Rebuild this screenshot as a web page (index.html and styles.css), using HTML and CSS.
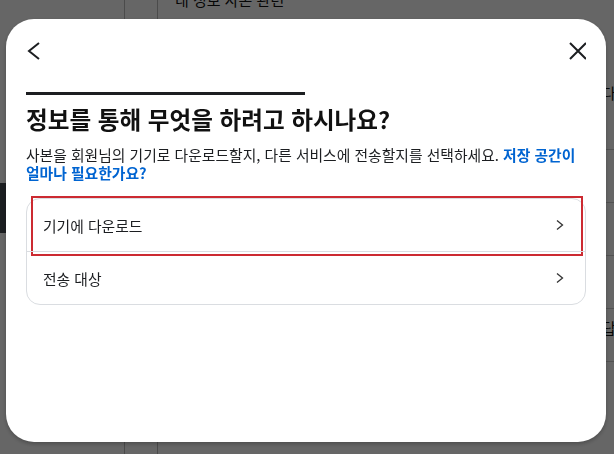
FILE: index.html
```html
<!DOCTYPE html>
<html lang="ko">
<head>
    <meta charset="UTF-8">
    <meta name="viewport" content="width=device-width, initial-scale=1.0">
    <title>정보 다운로드 또는 전송</title>
    <link rel="stylesheet" href="styles.css">
</head>
<body>
    <!-- page behind the dialog -->
    <div class="page">
        <aside class="sidebar">
            <div class="nav-item active"></div>
        </aside>
        <div class="rail"></div>
        <main class="main">
            <div class="main-title">내 정보 사본 관련</div>
            <ul class="rows">
                <li class="row"><span class="row-text first">다운로드</span></li>
                <li class="row"></li>
                <li class="row"></li>
                <li class="row"></li>
                <li class="row"><span class="row-text last">답변</span></li>
            </ul>
        </main>
    </div>

    <div class="overlay">
        <div class="modal" role="dialog">
            <div class="modal-header">
                <button class="icon-btn" aria-label="뒤로">
                    <svg width="24" height="24" viewBox="0 0 24 24"><path d="M13 4 L3 12 L13 20" fill="none" stroke="#1c1e21" stroke-width="2"/></svg>
                </button>
                <button class="icon-btn" aria-label="닫기">
                    <svg width="24" height="24" viewBox="0 0 24 24"><path d="M8 4 L24 20 M24 4 L8 20" fill="none" stroke="#1c1e21" stroke-width="2"/></svg>
                </button>
            </div>

            <div class="modal-body">
                <div class="progress"></div>
                <h1 class="title">정보를 통해 무엇을 하려고 하시나요?</h1>
                <p class="desc">사본을 회원님의 기기로 다운로드할지, 다른 서비스에 전송할지를 선택하세요. <a href="#" class="link">저장 공간이 얼마나 필요한가요?</a></p>

                <div class="options">
                    <a href="#" class="option highlighted">
                        <span>기기에 다운로드</span>
                        <svg width="10" height="12" viewBox="0 0 10 12"><path d="M2 1.5 L7.5 6 L2 10.5" fill="none" stroke="#333" stroke-width="1.3"/></svg>
                    </a>
                    <a href="#" class="option">
                        <span>전송 대상</span>
                        <svg width="10" height="12" viewBox="0 0 10 12"><path d="M2 1.5 L7.5 6 L2 10.5" fill="none" stroke="#333" stroke-width="1.3"/></svg>
                    </a>
                </div>
            </div>
        </div>
    </div>
</body>
</html>
```

FILE: styles.css
```css
body {
    margin: 0;
    font-family: "Noto Sans CJK KR", "Noto Sans", sans-serif;
    color: #1c1e21;
    background: #fff;
    overflow: hidden;
}

/* background page */
.page {
    display: flex;
    height: 100vh;
}

.sidebar {
    flex-shrink: 0;
    width: 125px;
    border-right: 1px solid #bbb;
    padding-top: 183px;
    box-sizing: border-box;
}

.nav-item {
    height: 50px;
}

.nav-item.active {
    background: #454b52;
}

.rail {
    flex-shrink: 0;
    width: 32px;
    border-right: 1px solid #bbb;
}

.main {
    flex: 1;
    min-width: 0;
    padding-left: 17px;
}

.main-title {
    margin-top: -11px;
    font-size: 15px;
    line-height: 22px;
    color: #111;
}

.rows {
    list-style: none;
    margin: 86px 0 0;
    padding: 0;
}

.row {
    height: 52px;
    border-bottom: 1px solid #ccc;
    display: flex;
    align-items: flex-start;
}

.row-text {
    margin-left: 427px;
    font-size: 15px;
    line-height: 20px;
    white-space: nowrap;
    color: #111;
}

.row-text.first {
    margin-top: -14px;
}

.row-text.last {
    margin-top: 9px;
}

/* dialog */
.overlay {
    position: fixed;
    inset: 0;
    background: rgba(0, 0, 0, 0.6);
    display: flex;
    align-items: flex-start;
    padding: 19px 0 0 6px;
}

.modal {
    width: 600px;
    height: 423px;
    background: #fff;
    border-radius: 28px;
    box-shadow: 0 2px 4px rgba(0, 0, 0, 0.25);
    display: flex;
    flex-direction: column;
}

.modal-header {
    display: flex;
    justify-content: space-between;
    padding: 20px 20px 0;
}

.icon-btn {
    background: none;
    border: none;
    padding: 0;
    width: 24px;
    height: 24px;
    cursor: pointer;
}

.icon-btn svg {
    display: block;
}

.modal-body {
    padding: 0 20px;
}

.progress {
    margin-top: 29px;
    width: 279px;
    height: 3px;
    background: #1c1e21;
}

.title {
    margin: 10px 0 0;
    font-size: 23.6px;
    line-height: 28px;
    font-weight: 700;
    color: #111;
}

.desc {
    margin: 13px 0 0;
    font-size: 14.8px;
    line-height: 18px;
}

.link {
    color: #0064d1;
    font-weight: 700;
    text-decoration: none;
}

.options {
    margin-top: 16px;
    border: 1px solid #dadde1;
    border-radius: 14px;
}

.option {
    position: relative;
    display: flex;
    align-items: center;
    justify-content: space-between;
    height: 52px;
    padding: 0 16px;
    font-size: 14.8px;
    color: #1c1e21;
    text-decoration: none;
}

.option + .option {
    border-top: 1px solid #dadde1;
}

.option svg {
    margin-right: 4px;
}

/* red annotation box */
.highlighted::after {
    content: "";
    position: absolute;
    top: -3px;
    left: 4px;
    right: 2px;
    bottom: -5px;
    border: 2px solid #cc2a31;
}
```
